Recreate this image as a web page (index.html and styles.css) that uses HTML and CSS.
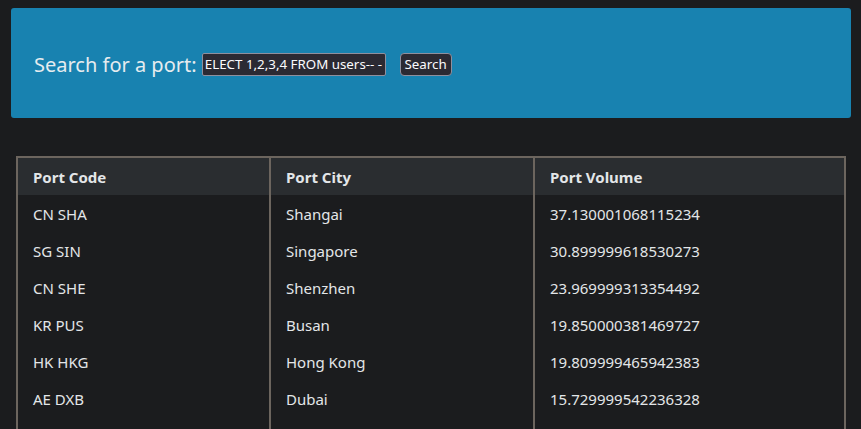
FILE: index.html
```html
<!DOCTYPE html>
<html>
<head>
<meta charset="utf-8">
<link rel="stylesheet" href="styles.css">
</head>
<body>
<div class="search-bar">
  <label class="search-label" for="q">Search for a port:</label>
  <input id="q" class="search-input" type="text" value="' UNION SELECT 1,2,3,4 FROM users-- -">
  <button class="search-btn">Search</button>
</div>
<table class="ports">
  <thead>
    <tr><th class="c1">Port Code</th><th class="c2">Port City</th><th class="c3">Port Volume</th></tr>
  </thead>
  <tbody>
    <tr><td>CN SHA</td><td>Shangai</td><td>37.130001068115234</td></tr>
    <tr><td>SG SIN</td><td>Singapore</td><td>30.899999618530273</td></tr>
    <tr><td>CN SHE</td><td>Shenzhen</td><td>23.969999313354492</td></tr>
    <tr><td>KR PUS</td><td>Busan</td><td>19.850000381469727</td></tr>
    <tr><td>HK HKG</td><td>Hong Kong</td><td>19.809999465942383</td></tr>
    <tr><td>AE DXB</td><td>Dubai</td><td>15.729999542236328</td></tr>
    <tr><td>&nbsp;</td><td>&nbsp;</td><td>&nbsp;</td></tr>
  </tbody>
</table>
<script>
  var i = document.getElementById('q');
  i.scrollLeft = i.scrollWidth;
</script>
</body>
</html>
```

FILE: styles.css
```css
html, body {
  margin: 0;
  padding: 0;
  background: #1b1c1e;
  font-family: "Noto Sans", "Open Sans", sans-serif;
  color: #e3e6e8;
  overflow: hidden;
}
.search-bar {
  margin: 8px 10px 0 11px;
  height: 110px;
  box-sizing: border-box;
  background: #1882b0;
  border-radius: 3px;
  display: flex;
  align-items: center;
  padding: 2px 0 0 23px;
}
.search-label {
  font-size: 20px;
  color: #e6ecef;
  margin-right: 5px;
}
.search-input {
  width: 184px;
  height: 23px;
  box-sizing: border-box;
  background: #2b2a33;
  border: 1px solid #8f8f9d;
  border-radius: 2px;
  color: #fbfbfe;
  font-family: "Noto Sans", sans-serif;
  font-size: 13.333px;
  padding: 0 2px;
  margin: 0;
}
.search-btn {
  margin-left: 14px;
  width: 52px;
  height: 23px;
  box-sizing: border-box;
  background: #2b2a33;
  border: 1px solid #8f8f9d;
  border-radius: 4px;
  color: #fbfbfe;
  font-family: "Noto Sans", sans-serif;
  font-size: 13.333px;
  padding: 0;
}
.ports {
  margin: 38px 16px 0 16px;
  width: 830px;
  border-collapse: collapse;
  border: 2px solid #6c655e;
  font-size: 15px;
}
.ports th {
  background: #2a2d30;
  text-align: left;
  font-weight: bold;
  height: 38px;
  padding: 0 15px;
  border-left: 2px solid #6c655e;
  box-sizing: border-box;
}
.ports td {
  height: 37px;
  padding: 0 15px;
  border-left: 2px solid #6c655e;
  box-sizing: border-box;
}
.ports .c1 { width: 253px; }
.ports .c2 { width: 264px; }
```
